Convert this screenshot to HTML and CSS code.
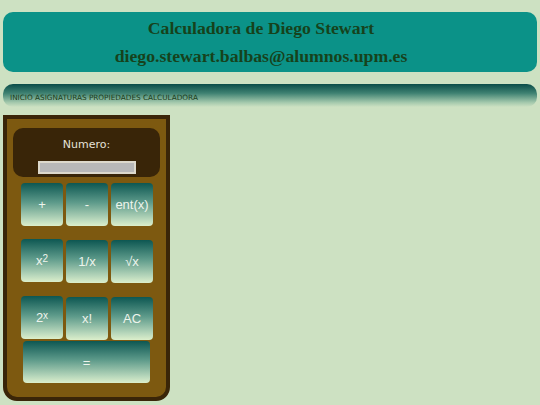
FILE: index.html
```html
<!DOCTYPE html>
<html lang="es">
<head>
<meta charset="utf-8">
<title>Calculadora</title>
<link rel="stylesheet" href="styles.css">
</head>
<body>
<div class="page">
  <header class="cabecera">
    <div class="titulo">Calculadora de Diego Stewart</div>
    <div class="titulo">diego.stewart.balbas@alumnos.upm.es</div>
  </header>
  <nav class="menu">INICIO ASIGNATURAS PROPIEDADES CALCULADORA</nav>
  <div class="calc">
    <div class="pantalla">
      <div class="etiqueta">Numero:</div>
      <div class="campo"></div>
    </div>
    <div class="fila fila1">
      <div class="tecla">+</div>
      <div class="tecla">-</div>
      <div class="tecla">ent(x)</div>
    </div>
    <div class="fila fila2">
      <div class="tecla alta">x<sup>2</sup></div>
      <div class="tecla">1/x</div>
      <div class="tecla">√x</div>
    </div>
    <div class="fila fila3">
      <div class="tecla alta">2<sup>x</sup></div>
      <div class="tecla">x!</div>
      <div class="tecla">AC</div>
    </div>
    <div class="fila fila4">
      <div class="tecla igual">=</div>
    </div>
  </div>
</div>
</body>
</html>
```

FILE: styles.css
```css
html, body {
  margin: 0;
  padding: 0;
  background: #cde1c2;
}
.page {
  padding: 12px 3px 0 3px;
}
.cabecera {
  background: #0b9288;
  border-radius: 10px;
  padding: 2px 18px 2px 0;
  text-align: center;
  font-family: "Liberation Serif", "Times New Roman", serif;
  font-weight: bold;
  font-size: 17.7px;
  color: #16421c;
}
.titulo {
  line-height: 28px;
}
.menu {
  margin-top: 12px;
  height: 23px;
  border-radius: 10px;
  background: linear-gradient(to bottom, #0a4c48 0%, #3f8272 40%, #a3c8ac 80%, #cde1c2 100%);
  font-family: "DejaVu Sans", Verdana, sans-serif;
  font-size: 7.3px;
  color: #1b3d1b;
  padding: 9px 0 0 7px;
  box-sizing: border-box;
  line-height: 10px;
}
.calc {
  margin-top: 8px;
  width: 159px;
  height: 278px;
  background: #7d5910;
  border: 4px solid #3a2508;
  border-radius: 0 0 14px 14px;
  box-sizing: content-box;
  display: flex;
  flex-direction: column;
}
.pantalla {
  margin: 9px 0 0 6px;
  width: 147px;
  height: 49px;
  background: #392508;
  border-radius: 10px;
  display: flex;
  flex-direction: column;
  align-items: center;
}
.etiqueta {
  font-family: "DejaVu Sans", Verdana, sans-serif;
  font-size: 11px;
  color: #e6e2d8;
  margin-top: 10px;
  line-height: 13px;
}
.campo {
  margin-top: 10px;
  width: 94px;
  height: 9px;
  background: #b8b8b8;
  border: 2px solid #ddd9cc;
}
.fila {
  display: flex;
  gap: 3px;
  padding-left: 14px;
  align-items: flex-end;
}
.fila1 { margin-top: 6px; }
.fila2 { margin-top: 13px; }
.fila3 { margin-top: 13px; }
.fila4 { margin-top: 1px; padding-left: 16px; }
.tecla {
  width: 42px;
  height: 43px;
  border-radius: 4px;
  background: linear-gradient(to bottom, #0d5752 0%, #5d9a8a 45%, #b9d8bc 85%, #dcefcb 100%);
  color: #eef4ec;
  font-family: "Liberation Sans", Arial, sans-serif;
  font-size: 13px;
  display: flex;
  align-items: center;
  justify-content: center;
}
.tecla sup {
  font-size: 10px;
  line-height: 0;
  position: relative;
  top: -2px;
}
.alta {
  margin-bottom: 1px;
}
.igual {
  width: 127px;
  height: 42px;
}
```
